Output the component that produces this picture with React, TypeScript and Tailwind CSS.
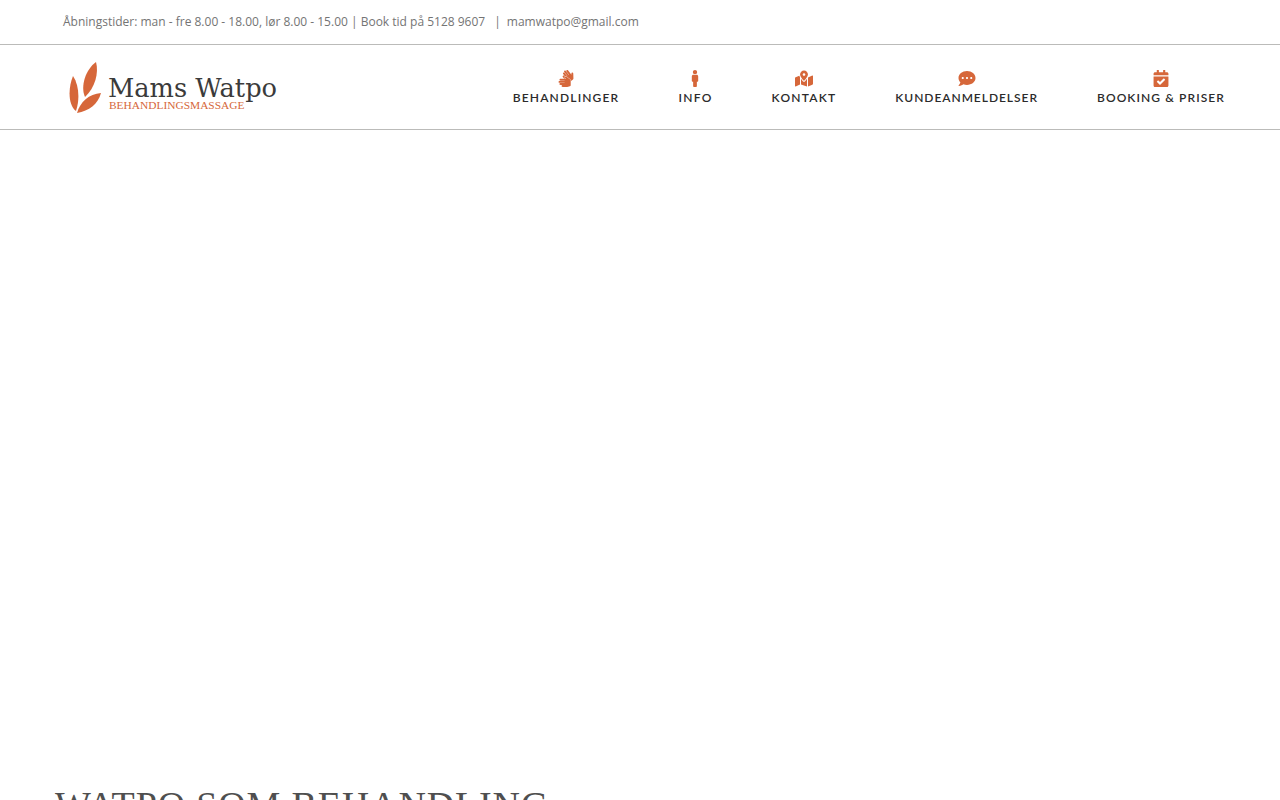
import { FaSignLanguage, FaMale, FaMapMarkedAlt, FaCommentDots, FaCalendarCheck } from "react-icons/fa";

const items = [
  { label: "BEHANDLINGER", Icon: FaSignLanguage, track: "tracking-[1.16px]" },
  { label: "INFO", Icon: FaMale, track: "tracking-[1.3px]" },
  { label: "KONTAKT", Icon: FaMapMarkedAlt, track: "tracking-[1.2px]" },
  { label: "KUNDEANMELDELSER", Icon: FaCommentDots, track: "tracking-[0.96px]" },
  { label: "BOOKING & PRISER", Icon: FaCalendarCheck, track: "tracking-[1.08px]" },
];

export default function App() {
  return (
    <div className="h-[800px] overflow-hidden bg-white">
      <div className="h-[45px] border-b border-[#bbbbb9] pl-[63px] flex items-center text-[12px] text-[#747474] font-['Open_Sans',sans-serif]">
        <span>Åbningstider: man - fre 8.00 - 18.00, lør 8.00 - 15.00 | Book tid på 5128 9607</span>
        <span className="ml-[9px]">|</span>
        <span className="ml-[6px]">mamwatpo@gmail.com</span>
      </div>
      <header className="h-[85px] border-b border-[#bbbbb9] flex items-center justify-between pl-[69px] pr-[55px]">
        <div className="flex items-start">
          <svg width="33" height="53" viewBox="0 0 33 53" className="mt-[1px]">
            <path d="M27 1 C30 12 26 27 16 36 C11 25 17 8 27 1Z" fill="#d6673a" />
            <path d="M4 15 C10 24 11 38 7 50 C-1 44 -1 27 4 15Z" fill="#d6673a" />
            <path d="M32 32 C29 43 20 50 8 52 C11 41 20 33 32 32Z" fill="#d6673a" />
          </svg>
          <div className="ml-[6px] mt-[17px] font-['DejaVu_Serif',serif]">
            <div className="text-[25.7px] leading-[23px] text-[#3b3b3b] whitespace-nowrap">Mams Watpo</div>
            <div className="font-['Liberation_Serif',serif] text-[11.4px] leading-[11px] text-[#d6673a] whitespace-nowrap pl-px">BEHANDLINGSMASSAGE</div>
          </div>
        </div>
        <nav className="flex gap-[59px] font-['Lato',sans-serif]">
          {items.map(({ label, Icon, track }) => (
            <a key={label} className="flex flex-col items-center">
              <Icon className="text-[#d6673a] w-[18px] h-[17px]" />
              <span className={`mt-[4px] text-[12px] leading-[14px] font-semibold text-[#2b2b2b] whitespace-nowrap ${track}`}>{label}</span>
            </a>
          ))}
        </nav>
      </header>
      <h1 className="mt-[653px] pl-[55px] text-[38px] leading-[44px] font-['Liberation_Serif',serif] text-[#4f4f4f] whitespace-nowrap tracking-[0.85px]">WATPO SOM BEHANDLING</h1>
    </div>
  );
}
